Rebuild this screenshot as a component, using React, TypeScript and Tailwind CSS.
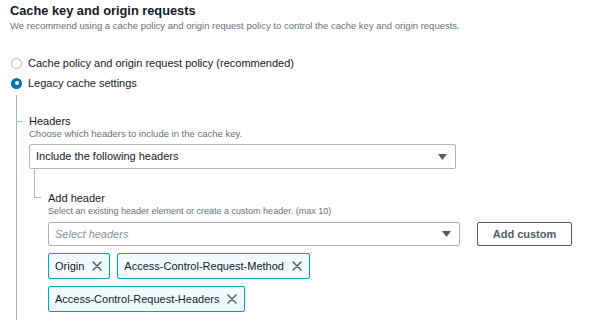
const FONT = { fontFamily: '"Liberation Sans", Arial, sans-serif' };

function Caret() {
  return (
    <svg width="9" height="6" viewBox="0 0 9 6" className="shrink-0">
      <path d="M0 0h9L4.5 6z" fill="#545b64" />
    </svg>
  );
}

function Dismiss() {
  return (
    <svg width="10" height="10" viewBox="0 0 10 10" className="shrink-0">
      <path d="M1 1l8 8M9 1l-8 8" stroke="#545b64" strokeWidth="1.5" strokeLinecap="round" />
    </svg>
  );
}

function Radio({ checked, label }: { checked?: boolean; label: string }) {
  return (
    <label className="flex h-[20px] items-center pl-[1px]">
      {checked ? (
        <span className="flex h-[11px] w-[11px] items-center justify-center rounded-full bg-[#0073bb]">
          <span className="h-[4px] w-[4px] rounded-full bg-white" />
        </span>
      ) : (
        <span className="h-[11px] w-[11px] rounded-full border border-[#aab7b8] bg-white" />
      )}
      <span className="ml-[6px] text-[11px] text-[#16191f]">{label}</span>
    </label>
  );
}

function Token({ label }: { label: string }) {
  return (
    <div className="flex h-[26px] items-center gap-[8px] rounded-[2px] border border-[#00a1c9] bg-[#f1faff] pl-[6px] pr-[7px] text-[11px] text-[#16191f]">
      <span>{label}</span>
      <Dismiss />
    </div>
  );
}

export default function App() {
  return (
    <div className="h-[320px] w-[596px] overflow-hidden bg-white pl-[10px] pt-[2px]" style={FONT}>
      <h2 className="text-[12.8px] font-bold leading-[18px] text-[#16191f]">Cache key and origin requests</h2>
      <p className="text-[9.5px] leading-[12px] text-[#687078]">
        We recommend using a cache policy and origin request policy to control the cache key and origin requests.
      </p>

      <div className="mt-[21px]">
        <Radio label="Cache policy and origin request policy (recommended)" />
        <Radio checked label="Legacy cache settings" />
      </div>

      <div className="ml-[6px] mt-[2px] border-l border-[#aab7b8] pb-[20px] pt-[19px]">
        <div className="flex h-[14px] items-center">
          <span className="h-px w-[6px] bg-[#aab7b8]" />
          <span className="ml-[6px] text-[11px] text-[#16191f]">Headers</span>
        </div>
        <div className="ml-[12px]">
          <p className="text-[9.5px] leading-[12px] text-[#687078]">Choose which headers to include in the cache key.</p>
          <div className="mt-[4px] flex h-[25px] w-[427px] items-center justify-between rounded-[2px] border border-[#aab7b8] pl-[6px] pr-[8px] text-[11px] text-[#16191f]">
            <span>Include the following headers</span>
            <Caret />
          </div>

          <div className="ml-[5px] flex items-start">
            <span className="h-[29px] w-[7px] shrink-0 border-b border-l border-[#aab7b8]" />
            <div className="ml-[7px] mt-[22px]">
              <div className="text-[11px] leading-[14px] text-[#16191f]">Add header</div>
              <p className="text-[9px] leading-[12px] text-[#687078]">
                Select an existing header element or create a custom header. (max 10)
              </p>
              <div className="mt-[5px] flex items-center gap-[17px]">
                <div className="flex h-[24px] w-[412px] items-center justify-between rounded-[2px] border border-[#aab7b8] pl-[6px] pr-[8px] text-[11px] italic text-[#879596]">
                  <span>Select headers</span>
                  <Caret />
                </div>
                <button className="flex h-[24px] w-[95px] items-center justify-center rounded-[2px] border border-[#545b64] text-[11px] font-bold text-[#545b64]">
                  Add custom
                </button>
              </div>
              <div className="mt-[7px] flex w-[420px] flex-wrap gap-[7px]">
                <Token label="Origin" />
                <Token label="Access-Control-Request-Method" />
                <Token label="Access-Control-Request-Headers" />
              </div>
            </div>
          </div>
        </div>
      </div>
    </div>
  );
}
